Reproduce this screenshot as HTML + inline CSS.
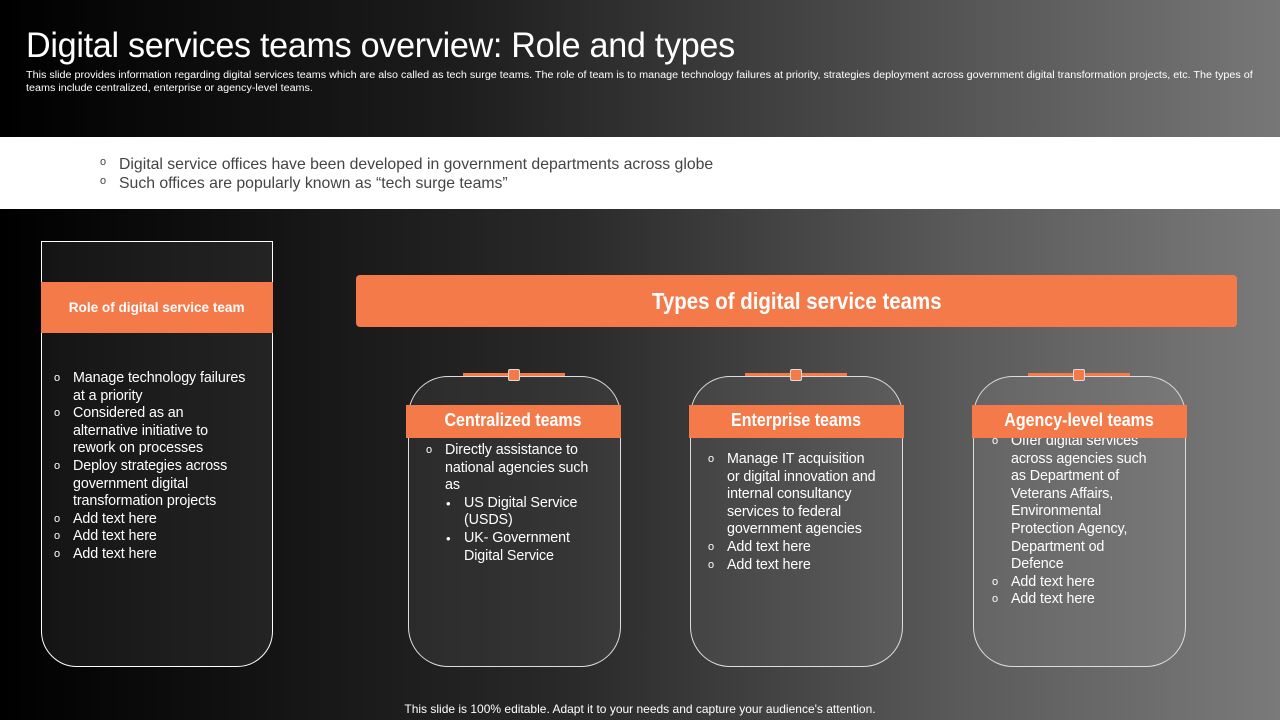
<!DOCTYPE html>
<html><head><meta charset="utf-8"><style>
*{margin:0;padding:0;box-sizing:border-box}
body{width:1280px;height:720px;overflow:hidden;font-family:"Liberation Sans",sans-serif;background:linear-gradient(90deg,#000 0%,#2a2a2a 45%,#5a5a5a 75%,#7a7a7a 100%);position:relative;color:#fff}
.hdr{position:absolute;left:0;top:0;width:1280px;height:137px;background:linear-gradient(90deg,#000 0%,#1c1c1c 35%,#555 75%,#777 100%)}
h1{position:absolute;left:26px;top:26px;font-size:35px;font-weight:normal;letter-spacing:-0.3px;transform:scaleX(0.975);transform-origin:left;white-space:nowrap}
.sub{position:absolute;left:26px;top:69px;font-size:9.8px;line-height:13px;white-space:nowrap;transform:scaleX(1.1);transform-origin:left}
.band{position:absolute;left:0;top:137px;width:1280px;height:72px;background:#fff;color:#444;font-size:15.8px}
ul{list-style:none}
li{position:relative;padding-left:19px;white-space:nowrap}
li:before{content:"o";position:absolute;left:0;font-size:11px}
li.b:before{content:"•";left:1px;font-size:13px}
.txt{font-size:14.3px;line-height:17.6px;color:#fff;letter-spacing:-0.1px}
.left{position:absolute;left:41px;top:241px;width:232px;height:426px;border:1px solid #fff;border-radius:0 0 36px 36px;background:rgba(255,255,255,0.07)}
.lh{position:absolute;left:41px;top:282px;width:232px;height:51px;background:#f47a4a;font-weight:bold;font-size:14px;text-align:center;line-height:51px;white-space:nowrap}
.lh span,.types span,.ch span{display:inline-block}
.lh span{transform:scaleX(0.97)}
.types span,.ch span{transform:scaleX(0.89)}
.types{position:absolute;left:356px;top:275px;width:881px;height:52px;background:#f47a4a;border-radius:4px;text-align:center;font-size:23px;font-weight:bold;line-height:52px}
.card{position:absolute;top:376px;width:213px;height:291px;border:1px solid #ddd;border-radius:40px;background:rgba(255,255,255,0.06)}
.ch{position:absolute;top:405px;width:215px;height:33px;background:#f47a4a;font-weight:bold;font-size:18px;text-align:center;line-height:31px;white-space:nowrap}
.conn{position:absolute;top:373px;width:102px;height:3px;background:#f47a4a}
.sq{position:absolute;top:369px;width:12px;height:12px;background:#f47a4a;border:1px solid #ddd;border-radius:2px}
.foot{position:absolute;top:702px;left:0;width:1280px;text-align:center;font-size:12px}
</style></head><body>
<div class="hdr"></div>
<h1>Digital services teams overview: Role and types</h1>
<div class="sub">This slide provides information regarding digital services teams which are also called as tech surge teams. The role of team is to manage technology failures at priority, strategies deployment across government digital transformation projects,  etc. The types of<br>teams include centralized, enterprise or agency-level teams.</div>
<div class="band"><ul><li style="position:absolute;left:100px;top:19px">Digital service offices have been developed in government departments across globe</li><li style="position:absolute;left:100px;top:38px">Such offices are popularly known as “tech surge teams”</li></ul></div>
<div class="left"></div>
<div class="lh"><span>Role of digital service team</span></div>
<ul class="txt" style="position:absolute;left:54px;top:370px;width:202px">
<li>Manage technology failures<br>at a priority</li><li>Considered as an<br>alternative initiative to<br>rework on processes</li><li>Deploy strategies across<br>government digital<br>transformation projects</li><li>Add text here</li><li>Add text here</li><li>Add text here</li></ul>
<div class="types"><span>Types of digital service teams</span></div>

<div class="card" style="left:408px"></div><div class="conn" style="left:463px"></div><div class="sq" style="left:508px"></div><div class="ch" style="left:406px"><span>Centralized teams</span></div>
<ul class="txt" style="position:absolute;left:426px;top:442px;width:177px"><li>Directly assistance to<br>national agencies such<br>as</li>
<li class="b" style="margin-left:19px">US Digital Service<br>(USDS)</li><li class="b" style="margin-left:19px">UK- Government<br>Digital Service</li></ul>

<div class="card" style="left:690px"></div><div class="conn" style="left:745px"></div><div class="sq" style="left:790px"></div><div class="ch" style="left:689px"><span>Enterprise teams</span></div>
<ul class="txt" style="position:absolute;left:708px;top:451px;width:182px"><li>Manage IT acquisition<br>or digital innovation and<br>internal consultancy<br>services to federal<br>government agencies</li><li>Add text here</li><li>Add text here</li></ul>

<div class="card" style="left:973px"></div><div class="conn" style="left:1028px"></div><div class="sq" style="left:1073px"></div>
<ul class="txt" style="position:absolute;left:992px;top:433px;width:172px"><li>Offer digital services<br>across agencies such<br>as Department of<br>Veterans Affairs,<br>Environmental<br>Protection Agency,<br>Department od<br>Defence</li><li>Add text here</li><li>Add text here</li></ul>
<div class="ch" style="left:972px"><span>Agency-level teams</span></div>

<div class="foot">This slide is 100% editable. Adapt it to your needs and capture your audience's attention.</div>
</body></html>
